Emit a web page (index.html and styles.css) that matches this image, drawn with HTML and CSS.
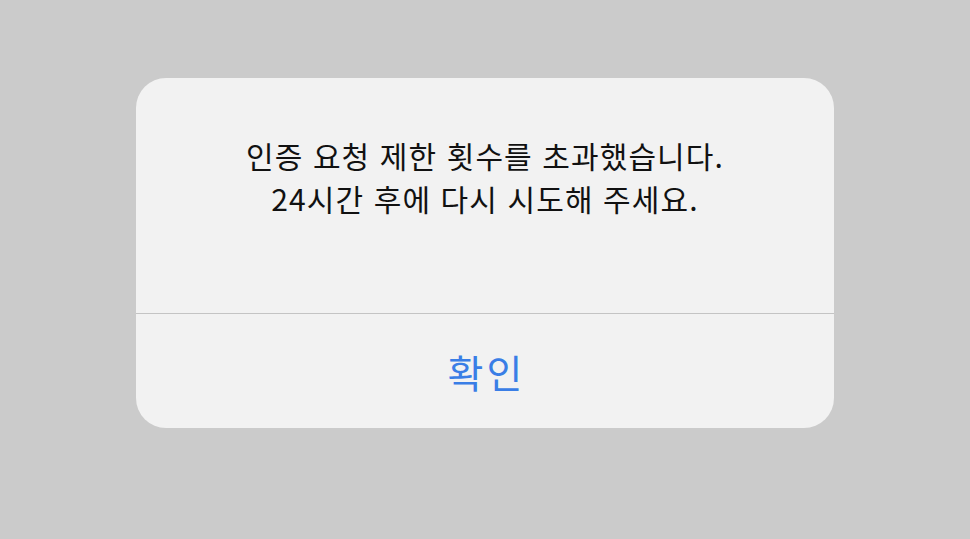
FILE: index.html
```html
<!DOCTYPE html>
<html lang="ko">
<head>
<meta charset="utf-8">
<link rel="stylesheet" href="styles.css">
</head>
<body>
<div class="screen">
  <div class="dialog">
    <div class="message">
      <p>인증 요청 제한 횟수를 초과했습니다.</p>
      <p>24시간 후에 다시 시도해 주세요.</p>
    </div>
    <div class="actions">
      <button class="ok">확인</button>
    </div>
  </div>
</div>
</body>
</html>
```
FILE: styles.css
```css
html, body {
  margin: 0;
  padding: 0;
  width: 970px;
  height: 539px;
  background: #cbcbcb;
  overflow: hidden;
}
.screen {
  padding: 78px 0 0 136px;
}
.dialog {
  width: 698px;
  height: 350px;
  background: #f2f2f2;
  border-radius: 30px;
  display: flex;
  flex-direction: column;
  overflow: hidden;
}
.message {
  height: 236px;
  box-sizing: border-box;
  padding-top: 56px;
  border-bottom: 1px solid #c4c4c4;
  text-align: center;
  font-family: "Noto Sans CJK KR", sans-serif;
  font-size: 30px;
  letter-spacing: 1.1px;
  color: #111;
  line-height: 43px;
}
.message p {
  margin: 0;
}
.actions {
  flex: 1;
  display: flex;
  align-items: center;
  justify-content: center;
}
.ok {
  background: none;
  border: none;
  padding: 0;
  font-family: "Noto Sans CJK KR", sans-serif;
  font-size: 39px;
  letter-spacing: 3px;
  text-indent: 3px;
  color: #3a7ee6;
  line-height: 1;
}
```
